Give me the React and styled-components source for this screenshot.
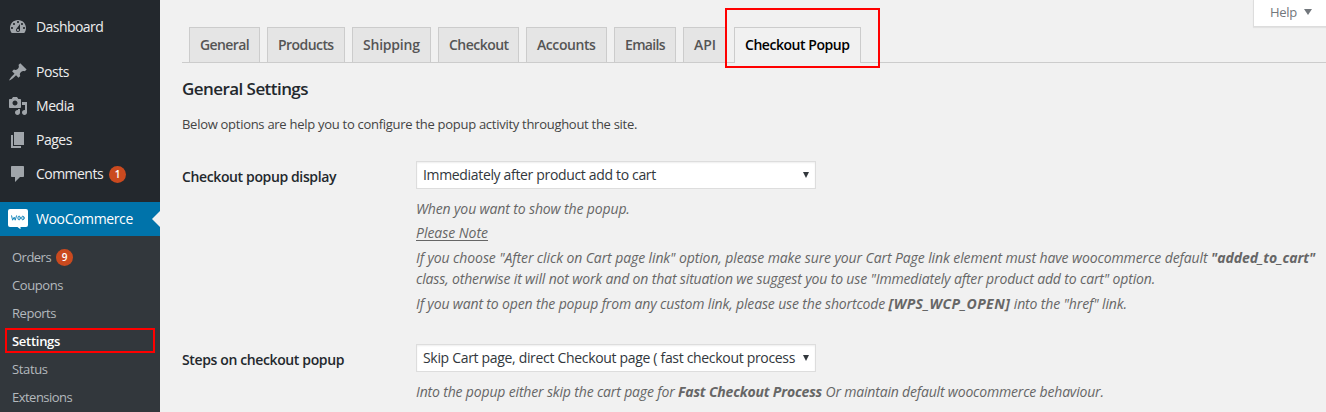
import React from "react";
import styled, { createGlobalStyle, css } from "styled-components";

const Global = createGlobalStyle`
  *, *::before, *::after { box-sizing: border-box; }
  body {
    margin: 0;
    background: #f1f1f1;
    color: #444;
    font: 13px/18px "Open Sans", "Noto Sans", sans-serif;
    overflow: hidden;
  }
`;

const Page = styled.div`
  display: flex;
  height: 412px;
  overflow: hidden;
`;

const Sidebar = styled.nav`
  flex: none;
  width: 160px;
  padding-top: 10px;
  background: #23282d;
`;

const MenuItem = styled.a`
  position: relative;
  display: flex;
  align-items: center;
  gap: 8px;
  height: 34px;
  padding-left: 8px;
  margin-bottom: ${(p) => (p.$gap ? 11 : 0)}px;
  font-size: 14px;
  color: ${(p) => (p.$current ? "#fff" : "#eee")};
  background: ${(p) => (p.$current ? "#0073aa" : "transparent")};
  ${(p) =>
    p.$current &&
    css`
      &::after {
        content: "";
        position: absolute;
        right: 0;
        top: 9px;
        border: 8px solid transparent;
        border-right-color: #f1f1f1;
        border-left-width: 0;
      }
    `}
`;

const Icon = styled.svg`
  flex: none;
  width: 20px;
  height: 20px;
  fill: #a0a5aa;
`;

const Label = styled.span`
  letter-spacing: ${(p) => p.$track || 0}px;
  white-space: pre;
`;

const Badge = styled.span`
  display: flex;
  align-items: center;
  justify-content: center;
  width: 17px;
  height: 17px;
  margin-left: ${(p) => p.$shift || 0}px;
  border-radius: 50%;
  background: #ca4a1f;
  color: #fff;
  font-size: 10px;
  line-height: 17px;
  font-weight: 600;
`;

const Submenu = styled.div`
  padding: 7px 0;
  height: 176px;
  background: #32373c;
`;

const SubItem = styled.a`
  position: relative;
  display: flex;
  align-items: center;
  gap: 6px;
  height: 28px;
  padding-left: 12px;
  color: ${(p) => (p.$current ? "#fff" : "#b4b9be")};
  font-weight: ${(p) => (p.$current ? 600 : 400)};
`;

const Highlight = styled.span`
  position: absolute;
  border: 2px solid #f00;
  pointer-events: none;
`;

const SettingsHighlight = styled(Highlight)`
  left: 5px;
  top: 1px;
  width: 150px;
  height: 25px;
`;

const TabHighlight = styled(Highlight)`
  left: -10px;
  top: -20px;
  width: 155px;
  height: 60px;
  z-index: 1;
`;

const Main = styled.main`
  flex: 1;
  min-width: 0;
  padding-left: 22px;
`;

const TopBar = styled.div`
  display: flex;
  justify-content: flex-end;
  height: 27px;
`;

const HelpTab = styled.button`
  display: flex;
  align-items: center;
  gap: 7px;
  width: 73px;
  height: 27px;
  padding: 0 0 2px 16px;
  border: 1px solid #ddd;
  border-width: 0 0 1px 1px;
  background: #fff;
  box-shadow: 0 1px 1px rgba(0, 0, 0, 0.06);
  color: #72777c;
  font: inherit;
`;

const Caret = styled.span`
  width: 0;
  border: ${(p) => p.$size}px solid transparent;
  border-top: ${(p) => p.$drop}px solid ${(p) => p.$color};
  border-bottom-width: 0;
`;

const Tabs = styled.div`
  display: flex;
  height: 36px;
  padding-left: 7px;
  border-bottom: 1px solid #ccc;
`;

const Tab = styled.a`
  position: relative;
  width: ${(p) => p.$width}px;
  height: ${(p) => (p.$active ? 36 : 35)}px;
  margin-right: ${(p) => p.$gap || 7}px;
  padding: 5px 0 0 10px;
  border: 1px solid #ccc;
  border-bottom: 0;
  background: ${(p) => (p.$active ? "#f1f1f1" : "#e5e5e5")};
  color: ${(p) => (p.$active ? "#000" : "#555")};
  font-size: 14px;
  line-height: 24px;
  font-weight: 600;
`;

const Heading = styled.h2`
  margin: 14px 0 0;
  color: #23282d;
  font-size: 17px;
  line-height: 24px;
  font-weight: 600;
`;

const Intro = styled.p`
  margin: 13px 0 0;
  line-height: 20px;
`;

const Field = styled.section`
  display: flex;
  margin-top: ${(p) => p.$top}px;
`;

const FieldLabel = styled.label`
  flex: none;
  width: 234px;
  padding-top: 6px;
  color: #23282d;
  font-size: 14px;
  line-height: 20px;
  font-weight: 600;
`;

const FieldBody = styled.div`
  flex: 1;
  min-width: 0;
`;

const Select = styled.div`
  display: flex;
  align-items: center;
  justify-content: space-between;
  width: 400px;
  height: 28px;
  padding: 0 6px;
  border: 1px solid #ddd;
  background: #fff;
  box-shadow: inset 0 1px 2px rgba(0, 0, 0, 0.07);
  color: #32373c;
  font-size: 14px;
  line-height: 20px;
`;

const Note = styled.p`
  margin: ${(p) => p.$top}px 0 0;
  color: #666;
  font-size: 14px;
  line-height: 21px;
  font-style: italic;
  white-space: nowrap;

  strong { font-weight: 700; }
  u { text-underline-offset: 2px; text-decoration-thickness: 1px; }
`;

const icons = {
  dashboard:
    "M3.76 16h12.48c1.1-1.37 1.76-3.11 1.76-5 0-4.42-3.58-8-8-8s-8 3.58-8 8c0 1.89.66 3.63 1.76 5zM10 4c.55 0 1 .45 1 1s-.45 1-1 1-1-.45-1-1 .45-1 1-1zM6 6c.55 0 1 .45 1 1s-.45 1-1 1-1-.45-1-1 .45-1 1-1zm8 0c.55 0 1 .45 1 1s-.45 1-1 1-1-.45-1-1 .45-1 1-1zm-5.37 5.55L12 7v6c0 1.1-.9 2-2 2s-2-.9-2-2c0-.57.24-1.08.63-1.45zM4 10c.55 0 1 .45 1 1s-.45 1-1 1-1-.45-1-1 .45-1 1-1zm12 0c.55 0 1 .45 1 1s-.45 1-1 1-1-.45-1-1 .45-1 1-1zm-5 3c0-.55-.45-1-1-1s-1 .45-1 1 .45 1 1 1 1-.45 1-1z",
  posts:
    "M10.44 3.02l1.82-1.82 6.36 6.35-1.83 1.82c-1.05-.68-2.48-.57-3.41.36l-.75.75c-.92.93-1.04 2.35-.35 3.41l-1.83 1.82-2.41-2.41-2.8 2.79c-.42.42-3.38 2.71-3.8 2.29s1.86-3.39 2.28-3.81l2.79-2.79L4.1 9.36l1.83-1.82c1.05.69 2.48.57 3.4-.36l.75-.75c.93-.92 1.05-2.35.36-3.41z",
  media:
    "M13 11V4c0-.55-.45-1-1-1h-1.67L9 1H5L3.67 3H2c-.55 0-1 .45-1 1v7c0 .55.45 1 1 1h10c.55 0 1-.45 1-1zM7 4.5c1.38 0 2.5 1.12 2.5 2.5S8.38 9.5 7 9.5 4.5 8.38 4.5 7 5.62 4.5 7 4.5zM14 6h5v10.5c0 1.38-1.12 2.5-2.5 2.5S14 17.88 14 16.5s1.12-2.5 2.5-2.5c.17 0 .34.02.5.05V9h-3V6zm-4 8.05V13h2v3.5c0 1.38-1.12 2.5-2.5 2.5S7 17.88 7 16.5 8.12 14 9.5 14c.17 0 .34.02.5.05z",
  pages: "M6 15V2h10v13H6zm-1 1h8v2H3V5h2v11z",
  comments:
    "M4 2h11c.6 0 1 .4 1 1v9c0 .6-.4 1-1 1h-3l-5 5v-5H4c-.6 0-1-.4-1-1V3c0-.6.4-1 1-1z",
};

const menu = [
  { icon: "dashboard", label: "Dashboard", track: -0.56, gap: true },
  { icon: "posts", label: "Posts", track: -0.45 },
  { icon: "media", label: "Media", track: -0.45 },
  { icon: "pages", label: "Pages", track: -0.5 },
  { icon: "comments", label: "Comments", track: -0.53, badge: 1, gap: true },
];

const submenu = [
  { label: "Orders", track: -0.52, badge: 9 },
  { label: "Coupons", track: -0.42 },
  { label: "Reports", track: -0.46 },
  { label: "Settings", track: -0.28, current: true },
  { label: "Status", track: -0.36 },
  { label: "Extensions", track: -0.52 },
];

const tabs = [
  { label: "General", width: 71, track: -0.607 },
  { label: "Products", width: 78, track: -0.56 },
  { label: "Shipping", width: 79, track: -0.22 },
  { label: "Checkout", width: 81, track: -0.53 },
  { label: "Accounts", width: 81, track: -0.42 },
  { label: "Emails", width: 62, track: -0.68 },
  { label: "API", width: 44, track: -0.045 },
  { label: "Checkout Popup", width: 127, track: -0.46, active: true },
];

function WooIcon() {
  return (
    <Icon viewBox="0 0 20 20">
      <path
        fill="#fff"
        d="M2 0h16a2 2 0 0 1 2 2v14a2 2 0 0 1-2 2h-5.500v2.300L9.500 18H2a2 2 0 0 1-2-2V2a2 2 0 0 1 2-2z"
      />
      <g fill="none" stroke="#1686bb" strokeWidth="1" strokeLinecap="round" strokeLinejoin="round">
        <path d="M3.600 6.800l1 4.400 1.600-3 1 3 1.300-4.400" />
        <ellipse cx="11.100" cy="9" rx="1.200" ry="1.900" />
        <ellipse cx="14.900" cy="9" rx="1.200" ry="1.900" />
      </g>
    </Icon>
  );
}

export default function App() {
  return (
    <Page>
      <Global />
      <Sidebar>
        {menu.map((m) => (
          <MenuItem key={m.label} $gap={m.gap}>
            <Icon viewBox="0 0 20 20">
              <path d={icons[m.icon]} />
            </Icon>
            <Label $track={m.track}>{m.label}</Label>
            {m.badge && <Badge $shift={-2}>{m.badge}</Badge>}
          </MenuItem>
        ))}
        <MenuItem $current>
          <WooIcon />
          <Label $track={-0.38}>WooCommerce</Label>
        </MenuItem>
        <Submenu>
          {submenu.map((s) => (
            <SubItem key={s.label} $current={s.current}>
              <Label $track={s.track}>{s.label}</Label>
              {s.badge && <Badge $shift={-1}>{s.badge}</Badge>}
              {s.current && <SettingsHighlight />}
            </SubItem>
          ))}
        </Submenu>
      </Sidebar>
      <Main>
        <TopBar>
          <HelpTab>
            <Label $track={-0.28}>Help</Label>
            <Caret $size={4} $drop={6} $color="#72777c" />
          </HelpTab>
        </TopBar>
        <Tabs>
          {tabs.map((t) => (
            <Tab key={t.label} $width={t.width} $active={t.active} $gap={t.gap}>
              <Label $track={t.track}>{t.label}</Label>
              {t.active && <TabHighlight />}
            </Tab>
          ))}
        </Tabs>
        <Heading>
          <Label $track={-0.56}>General Settings</Label>
        </Heading>
        <Intro>
          <Label $track={-0.28}>
            Below options are help you to configure the popup activity throughout the site.
          </Label>
        </Intro>
        <Field $top={27}>
          <FieldLabel>
            <Label $track={-0.375}>Checkout popup display</Label>
          </FieldLabel>
          <FieldBody>
            <Select>
              <Label $track={-0.335}>Immediately after product add to cart</Label>
              <Caret $size={3.5} $drop={6} $color="#32373c" />
            </Select>
            <Note $top={9}>
              <Label $track={-0.125}>When you want to show the popup.</Label>
            </Note>
            <Note $top={3}>
              <u>
                <Label $track={-0.028}>Please Note</Label>
              </u>
            </Note>
            <Note $top={4}>
              <Label $track={-0.102}>
                {'If you choose "After click on Cart page link" option, please make sure your Cart Page link element must have woocommerce default '}
              </Label>
              <strong>
                <Label $track={-0.1}>"added_to_cart"</Label>
              </strong>
              <br />
              <Label $track={-0.145}>
                {'class, otherwise it will not work and on that situation we suggest you to use "Immediately after product add to cart" option.'}
              </Label>
            </Note>
            <Note $top={4}>
              <Label $track={-0.145}>
                {"If you want to open the popup from any custom link, please use the shortcode "}
              </Label>
              <strong>
                <Label $track={0.44}>[WPS_WCP_OPEN]</Label>
              </strong>
              <Label $track={-0.13}>{' into the "href" link.'}</Label>
            </Note>
          </FieldBody>
        </Field>
        <Field $top={30}>
          <FieldLabel>
            <Label $track={-0.375}>Steps on checkout popup</Label>
          </FieldLabel>
          <FieldBody>
            <Select>
              <Label $track={-0.32}>
                Skip Cart page, direct Checkout page ( fast checkout process
              </Label>
              <Caret $size={3.5} $drop={6} $color="#32373c" />
            </Select>
            <Note $top={9}>
              <Label $track={-0.16}>{"Into the popup either skip the cart page for "}</Label>
              <strong>
                <Label $track={-0.178}>Fast Checkout Process</Label>
              </strong>
              <Label $track={-0.18}>{" Or maintain default woocommerce behaviour."}</Label>
            </Note>
          </FieldBody>
        </Field>
      </Main>
    </Page>
  );
}
